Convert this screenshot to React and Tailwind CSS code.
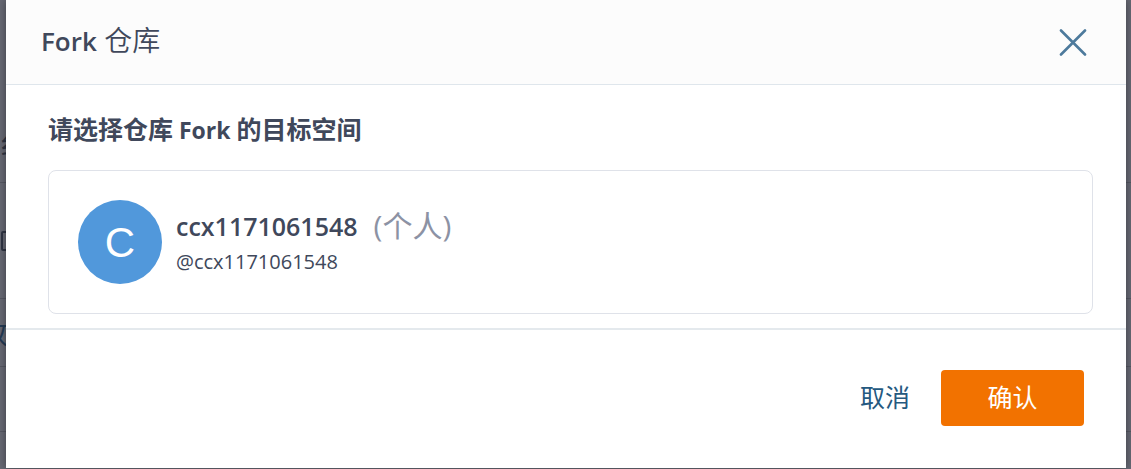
const rowStyle = "flex items-center border-b border-[#555762]";

function PageBehind() {
  return (
    <div aria-hidden="true" className="absolute inset-0 flex flex-col overflow-hidden bg-[#666873] text-[28px] text-[#2f3443]">
      <div className={`${rowStyle} h-[183px] pt-[106px]`}>
        <span>纟</span>
      </div>
      <div className={`${rowStyle} h-[116px]`}>
        <span className="ml-px size-5 rounded-xs border-2 border-[#2f3443]" />
      </div>
      <div className={`${rowStyle} h-[68px]`}>
        <span className="-ml-5 text-[#243a54]">收</span>
      </div>
      <div className={`${rowStyle} h-[65px]`} />
    </div>
  );
}

export default function App() {
  return (
    <div className="relative pr-[5px] pb-px pl-1.5 font-['Open_Sans','Noto_Sans_CJK_SC',sans-serif] text-[#40485b]">
      <PageBehind />
      <div role="dialog" aria-labelledby="dialog-title" className="relative bg-white shadow-[0_0_8px_rgba(0,0,0,0.4)]">
        <header className="flex h-[85px] items-start justify-between border-b border-[#dfe6ec] bg-[#fcfcfc] pt-5 pr-[39px] pl-[35px]">
          <h1 id="dialog-title" className="text-[28px] leading-10">
            <span className="text-[26px] font-semibold">Fork</span> <span className="font-[350]">仓库</span>
          </h1>
          <button type="button" aria-label="关闭" className="mt-2 text-[#4d7a9c]">
            <svg className="size-7" viewBox="0 0 28 28" fill="none" stroke="currentColor" strokeWidth="2.6" strokeLinecap="round">
              <path d="M2 2.5 26 26.5M26 2.5 2 26.5" />
            </svg>
          </button>
        </header>

        <main className="px-[42px] pt-6 pb-3.5">
          <h2 className="mb-5 h-[41px] text-[25px] leading-[41px] font-bold">
            请选择仓库<span className="text-[23px]"> Fork </span>的目标空间
          </h2>
          <button type="button" className="-mr-[9px] flex h-36 w-[calc(100%+9px)] items-center rounded-lg border border-[#dfe2e9] px-[29px] text-left">
            <span className="mr-3.5 flex size-[84px] shrink-0 items-center justify-center rounded-full bg-[#5198db] font-['Liberation_Sans',sans-serif] text-[42px] text-white">
              C
            </span>
            <span className="flex flex-col pt-1">
              <span className="flex items-center leading-9">
                <span className="text-[25px] font-semibold">ccx1171061548</span>
                <span className="ml-4 text-[30px] text-[#8c92a4]">(个人)</span>
              </span>
              <span className="text-xl leading-9">@ccx1171061548</span>
            </span>
          </button>
        </main>

        <footer className="flex h-[140px] items-center justify-end gap-[31px] border-t-2 border-[#e4e9ed] pr-[42px] pb-0.5 text-[25px]">
          <button type="button" className="text-[#25597f]">取消</button>
          <button type="button" className="h-14 w-[143px] rounded-sm bg-[#f27200] text-white">确认</button>
        </footer>
      </div>
    </div>
  );
}
